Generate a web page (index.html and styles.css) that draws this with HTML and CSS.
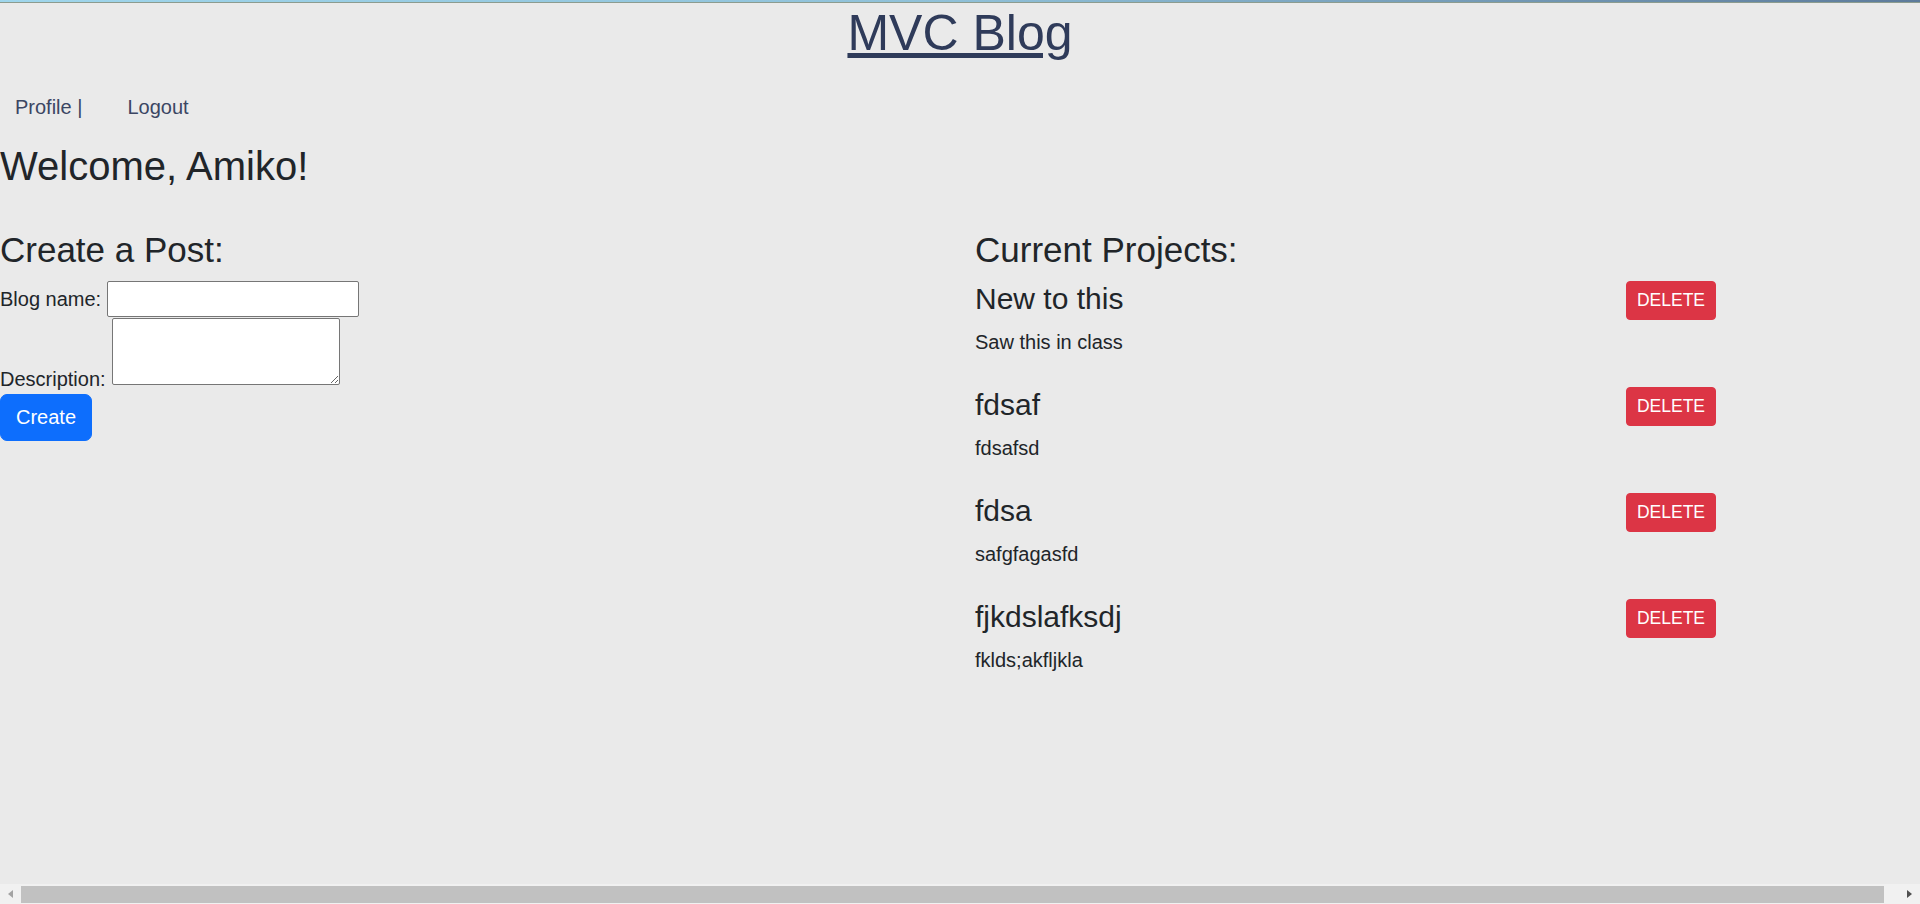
FILE: index.html
```html
<!DOCTYPE html>
<html lang="en">
<head>
<meta charset="utf-8">
<title>MVC Blog</title>
<link rel="stylesheet" href="styles.css">
</head>
<body>
<div class="topline"></div>
<h1 class="site-title"><a href="#" class="site-link">MVC Blog</a></h1>
<nav class="nav">
  <a href="#" class="nav-link nav-profile">Profile |</a>
  <a href="#" class="nav-link nav-logout">Logout</a>
</nav>
<h1 class="welcome">Welcome, Amiko!</h1>
<div class="row">
  <div class="col-left">
    <h3 class="section-title">Create a Post:</h3>
    <form class="post-form">
      <div class="form-row form-row-name">
        <label class="form-label" for="name">Blog name:</label>
        <input class="text-input" id="name" type="text">
      </div>
      <div class="form-row form-row-desc">
        <label class="form-label" for="desc">Description:</label>
        <textarea class="text-area" id="desc"></textarea>
      </div>
      <button type="button" class="btn btn-primary">Create</button>
    </form>
  </div>
  <div class="col-right">
    <h3 class="section-title">Current Projects:</h3>
    <div class="project">
      <div class="project-head">
        <h4 class="project-title">New to this</h4>
        <button type="button" class="btn-delete">DELETE</button>
      </div>
      <p class="project-desc">Saw this in class</p>
    </div>
    <div class="project">
      <div class="project-head">
        <h4 class="project-title">fdsaf</h4>
        <button type="button" class="btn-delete">DELETE</button>
      </div>
      <p class="project-desc">fdsafsd</p>
    </div>
    <div class="project">
      <div class="project-head">
        <h4 class="project-title">fdsa</h4>
        <button type="button" class="btn-delete">DELETE</button>
      </div>
      <p class="project-desc">safgfagasfd</p>
    </div>
    <div class="project">
      <div class="project-head">
        <h4 class="project-title">fjkdslafksdj</h4>
        <button type="button" class="btn-delete">DELETE</button>
      </div>
      <p class="project-desc">fklds;akfljkla</p>
    </div>
  </div>
</div>
<div class="hscroll" aria-hidden="true">
  <span class="hscroll-arrow hscroll-left"></span>
  <span class="hscroll-track"><span class="hscroll-thumb"></span></span>
  <span class="hscroll-arrow hscroll-right"></span>
</div>
</body>
</html>
```
FILE: styles.css
```css
html {
  background: #eaeaea;
}
body {
  margin: 0;
  background: #eaeaea;
  color: #212529;
  font-family: "Liberation Sans", Arial, sans-serif;
  font-size: 20px;
  line-height: 1.5;
  overflow-x: hidden;
}
.topline {
  height: 2px;
  background: linear-gradient(to right, #9fd6ec 0%, #8fc0d8 50%, #5d7b9b 100%);
  border-bottom: 1px solid #8c9c8f;
}
.site-title {
  margin: 0;
  font-size: 50px;
  font-weight: 400;
  line-height: 60px;
  text-align: center;
}
.site-link {
  color: #2f3b5a;
  text-decoration: underline;
}
.nav {
  display: flex;
  margin-top: 29px;
  line-height: 30px;
  padding-left: 15px;
}
.nav-link {
  color: #3b4663;
  text-decoration: none;
}
.nav-logout {
  margin-left: 45px;
}
.welcome {
  margin: 20px 0 0;
  font-size: 40px;
  font-weight: 400;
  line-height: 48px;
}
.row {
  display: flex;
  margin-top: 39px;
  margin-right: -15px;
}
.col-left {
  width: 960px;
  flex: none;
}
.col-right {
  flex: 1;
  padding-left: 15px;
}
.section-title {
  margin: 0 0 10px;
  font-size: 35px;
  font-weight: 400;
  line-height: 42px;
}
.form-row {
  display: flex;
}
.form-row-name {
  align-items: center;
}
.form-row-desc {
  align-items: flex-end;
  margin-top: 1px;
}
.form-label {
  line-height: 30px;
  margin-right: 6px;
}
.text-input {
  box-sizing: border-box;
  width: 252px;
  height: 36px;
  margin: 0;
  border: 1px solid #767676;
  border-radius: 2px;
  background: #fff;
  font-size: 16px;
}
.text-area {
  box-sizing: border-box;
  width: 228px;
  height: 67px;
  margin: 0 0 8.5px;
  border: 1px solid #767676;
  border-radius: 2px;
  background: #fff;
  font-size: 16px;
}
.btn {
  font-family: inherit;
  cursor: pointer;
}
.btn-primary {
  display: block;
  box-sizing: border-box;
  height: 47.5px;
  padding: 7.5px 15px;
  border: 1.25px solid #0d6efd;
  border-radius: 7px;
  background: #0d6efd;
  color: #fff;
  font-size: 20px;
  line-height: 30px;
}
.project {
  padding-bottom: 10px;
}
.project-head {
  display: flex;
  justify-content: space-between;
  align-items: center;
  width: 741px;
}
.project-title {
  margin: 0 0 3px;
  font-size: 30px;
  font-weight: 400;
  line-height: 36px;
}
.btn-delete {
  box-sizing: border-box;
  height: 38.75px;
  padding: 5px 10px;
  border: 1.25px solid #dc3545;
  border-radius: 4px;
  background: #dc3545;
  color: #fff;
  font-family: inherit;
  font-size: 17.5px;
  line-height: 26.25px;
  cursor: pointer;
}
.project-desc {
  margin: 7px 0 20px;
  line-height: 30px;
}
.hscroll {
  position: fixed;
  left: 0;
  right: 0;
  bottom: 0;
  height: 20px;
  display: flex;
  align-items: center;
  background: #f1f1f1;
}
.hscroll-arrow {
  width: 21px;
  height: 20px;
  flex: none;
  position: relative;
}
.hscroll-left::before,
.hscroll-right::before {
  content: "";
  position: absolute;
  top: 6px;
  width: 0;
  height: 0;
  border-top: 4px solid transparent;
  border-bottom: 4px solid transparent;
}
.hscroll-left::before {
  left: 8px;
  border-right: 5px solid #a3a3a3;
}
.hscroll-right::before {
  right: 8px;
  border-left: 5px solid #505050;
}
.hscroll-track {
  flex: 1;
  height: 17px;
  margin-top: 2px;
  align-self: flex-start;
  display: flex;
}
.hscroll-thumb {
  flex: none;
  width: 1863px;
  height: 17px;
  background: #c1c1c1;
}
```
